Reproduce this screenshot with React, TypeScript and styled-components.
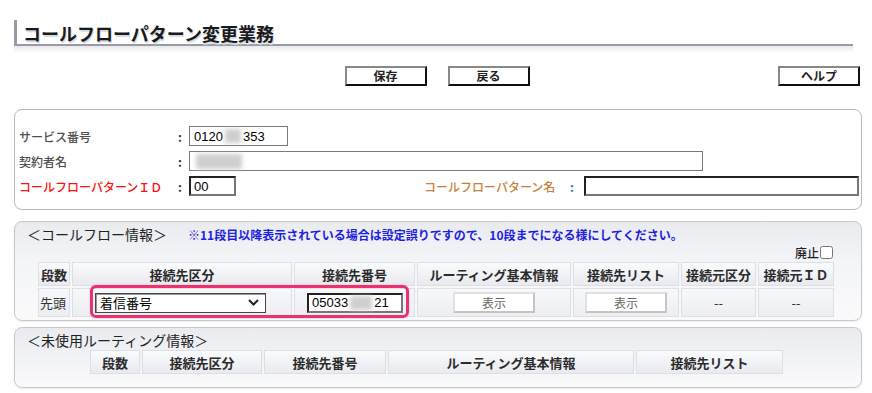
import styled, { createGlobalStyle } from "styled-components";

const Global = createGlobalStyle`
  body{
    margin: 0;
    background: #fff;
    font-family: "Noto Sans CJK JP", "Liberation Sans", sans-serif;
    font-size: 12px;
    color: #333;
  }
`

const Page = styled.div`
  padding: 20px 10px 8px 14px;
`

const Title = styled.h1`
  margin: 0;
  width: 830px;
  height: 24px;
  border-left: 3px solid #9a9aa5;
  border-bottom: 2px solid #9a9aa5;
  padding-left: 6px;
  font-size: 18px;
  line-height: 26px;
  font-weight: bold;
  color: #1a1a1a;
  text-shadow: 1px 2px 1px #d4dbe6;
  position: relative;
  &::after{
    content: '';
    position: absolute;
    left: -3px;
    right: 0;
    top: 26px;
    height: 7px;
    background: linear-gradient(#e9e9ec, rgba(255,255,255,0));
  }
`

const ButtonBar = styled.div`
  display: grid;
  grid-template-columns: 1fr auto 1fr;
  margin-top: 20px;
  padding-right: 2px;
`

const ButtonGroup = styled.div`
  display: flex;
  gap: 21px;
  grid-column: 2;
`

const RightCell = styled.div`
  display: flex;
  justify-content: flex-end;
`

const Button = styled.button`
  width: 82px;
  height: 20px;
  padding: 0;
  background: #fff;
  border: 2px solid;
  border-color: #888 #111 #111 #888;
  font-family: inherit;
  font-size: 12px;
  font-weight: bold;
  color: #222;
  line-height: 14px;
`

const Box = styled.div<{ $top: number }>`
  margin-top: ${p => p.$top}px;
  border: 1px solid #b9b9b9;
  border-radius: 8px;
`

const InfoBox = styled(Box)`
  padding: 16px 0 13px 4px;
  display: flex;
  flex-direction: column;
  gap: 5px;
`

const FormRow = styled.div`
  display: flex;
  align-items: center;
  height: 20px;
`

const Label = styled.span<{ $color?: string; $width: number }>`
  width: ${p => p.$width}px;
  color: ${p => p.$color || "#4f4f4f"};
  font-size: 12px;
  font-weight: 500;
  white-space: nowrap;
`

const Colon = styled.span<{ $color?: string; $width: number; $pad?: number }>`
  width: ${p => p.$width}px;
  padding-left: ${p => p.$pad ?? 4}px;
  box-sizing: border-box;
  color: ${p => p.$color || "#333"};
  font-weight: bold;
`

const Field = styled.div<{ $width: number; $inset?: boolean }>`
  width: ${p => p.$width}px;
  height: 20px;
  box-sizing: border-box;
  background: #fff;
  border: ${p => (p.$inset ? "2px solid" : "1px solid #7b7b7b")};
  border-color: ${p => (p.$inset ? "#222 #777 #777 #222" : "#7b7b7b")};
  display: flex;
  align-items: center;
  padding-left: ${p => (p.$inset ? 3 : 4)}px;
  font-family: "Liberation Sans", Arial, sans-serif;
  font-size: 13px;
  color: #000;
  white-space: nowrap;
`

const Blur = styled.span<{ $width: number; $height?: number }>`
  display: inline-block;
  width: ${p => p.$width}px;
  height: ${p => p.$height || 14}px;
  background: #cfcfcf;
  filter: blur(2px);
  margin: 0 2px;
`

const Section = styled(Box)`
  border-color: #c6c8cc;
  background: linear-gradient(#e9ebef, #f4f5f8 40px, #fafafb);
  box-shadow: 0 1px 2px rgba(0,0,0,0.08);
`

const SectionHead = styled.div`
  display: flex;
  align-items: baseline;
  gap: 21px;
  padding: 2px 0 0 12px;
  height: 20px;
`

const SectionTitle = styled.span`
  font-size: 14px;
  color: #222;
  line-height: 20px;
`

const Note = styled.span`
  font-size: 12px;
  font-weight: bold;
  color: #1f1fe0;
`

const AbolishRow = styled.div`
  display: flex;
  justify-content: flex-end;
  align-items: center;
  gap: 1px;
  padding-right: 28px;
  height: 16px;
  margin-bottom: 2px;
  font-size: 12px;
  font-weight: 500;
  color: #222;
  input{
    margin: 0;
    width: 13px;
    height: 13px;
  }
`

const TableWrap = styled.div<{ $left: number; $bottom: number }>`
  position: relative;
  margin-left: ${p => p.$left}px;
  padding-bottom: ${p => p.$bottom}px;
`

const Grid = styled.table<{ $width: number }>`
  width: ${p => p.$width}px;
  table-layout: fixed;
  border-collapse: separate;
  border-spacing: 2px;
  margin: -2px;
  th, td{
    border: 1px solid #dcdfe5;
    padding: 0;
    text-align: center;
    white-space: nowrap;
  }
  th{
    height: 22px;
    font-size: 13px;
    font-weight: bold;
    color: #2b2b2b;
    background: linear-gradient(#fafbfc, #e8eaef);
  }
  td{
    height: 27px;
    font-size: 13px;
    color: #333;
    background: linear-gradient(#f7f8fa, #eceef2);
  }
`

const Cell = styled.td<{ $align?: string; $pad?: number }>`
  && {
    text-align: ${p => p.$align || "center"};
    padding-left: ${p => p.$pad || 0}px;
  }
`

const SelectBox = styled.div`
  position: relative;
  width: 171px;
  height: 20px;
  box-sizing: border-box;
  border: 1px solid #444;
  box-shadow: inset 1px 1px 0 #999;
  background: #fff;
  display: flex;
  align-items: center;
  justify-content: space-between;
  padding: 0 6px 0 4px;
  font-size: 13px;
  color: #000;
  svg{ display: block; }
`

const ShowButton = styled.button`
  width: 82px;
  height: 21px;
  padding: 0;
  background: #fff;
  border: 2px solid;
  border-color: #e0e0e0 #c4c4c4 #c4c4c4 #e0e0e0;
  font-family: inherit;
  font-size: 12px;
  color: #666;
`

const Highlight = styled.div`
  position: absolute;
  left: 52px;
  top: 25px;
  width: 319px;
  height: 33px;
  box-sizing: border-box;
  border: 3px solid #e8336f;
  border-radius: 6px;
  box-shadow: 0 0 2px rgba(232, 51, 111, 0.4);
  pointer-events: none;
`

const flowCols = [32, 220, 121, 154, 106, 75, 76];
const flowHeads = ["段数", "接続先区分", "接続先番号", "ルーティング基本情報", "接続先リスト", "接続元区分", "接続元ＩＤ"];
const unusedCols = [50, 120, 122, 246, 147];
const unusedHeads = ["段数", "接続先区分", "接続先番号", "ルーティング基本情報", "接続先リスト"];

function App(){
  return(
    <Page>
      <Global />
      <Title>コールフローパターン変更業務</Title>

      <ButtonBar>
        <ButtonGroup>
          <Button>保存</Button>
          <Button>戻る</Button>
        </ButtonGroup>
        <RightCell>
          <Button>ヘルプ</Button>
        </RightCell>
      </ButtonBar>

      <InfoBox $top={23}>
        <FormRow>
          <Label $width={155}>サービス番号</Label>
          <Colon $width={15}>:</Colon>
          <Field $width={99}>0120<Blur $width={16} />353</Field>
        </FormRow>
        <FormRow>
          <Label $width={155}>契約者名</Label>
          <Colon $width={15}>:</Colon>
          <Field $width={514}><Blur $width={46} $height={15} /></Field>
        </FormRow>
        <FormRow>
          <Label $width={155} $color="#ff1010">コールフローパターンＩＤ</Label>
          <Colon $width={15}>:</Colon>
          <Field $width={47} $inset>00</Field>
          <Label $width={133} $color="#c8823c" style={{ marginLeft: 188 }}>コールフローパターン名</Label>
          <Colon $width={27} $pad={13} $color="#3070c0">:</Colon>
          <Field $width={275} $inset />
        </FormRow>
      </InfoBox>

      <Section $top={11}>
        <SectionHead>
          <SectionTitle>＜コールフロー情報＞</SectionTitle>
          <Note>※11段目以降表示されている場合は設定誤りですので、10段までになる様にしてください。</Note>
        </SectionHead>
        <AbolishRow>廃止<input type="checkbox" /></AbolishRow>
        <TableWrap $left={23} $bottom={3}>
          <Grid $width={800}>
            <colgroup>
              {flowCols.map((w, i) => <col key={i} style={{ width: w }} />)}
            </colgroup>
            <thead>
              <tr>{flowHeads.map(h => <th key={h}>{h}</th>)}</tr>
            </thead>
            <tbody>
              <tr>
                <Cell $align="left" $pad={1}>先頭</Cell>
                <Cell $align="left" $pad={22}>
                  <SelectBox>
                    <span>着信番号</span>
                    <svg width="11" height="7" viewBox="0 0 11 7">
                      <path d="M1 1l4.5 4.5L10 1" fill="none" stroke="#222" strokeWidth="2" />
                    </svg>
                  </SelectBox>
                </Cell>
                <Cell $align="left" $pad={12}>
                  <Field $width={96} $inset>05033<Blur $width={22} />21</Field>
                </Cell>
                <td><ShowButton>表示</ShowButton></td>
                <td><ShowButton>表示</ShowButton></td>
                <td>--</td>
                <td>--</td>
              </tr>
            </tbody>
          </Grid>
          <Highlight />
        </TableWrap>
      </Section>

      <Section $top={6}>
        <SectionHead>
          <SectionTitle>＜未使用ルーティング情報＞</SectionTitle>
        </SectionHead>
        <TableWrap $left={75} $bottom={13}>
          <Grid $width={697}>
            <colgroup>
              {unusedCols.map((w, i) => <col key={i} style={{ width: w }} />)}
            </colgroup>
            <thead>
              <tr>{unusedHeads.map(h => <th key={h}>{h}</th>)}</tr>
            </thead>
          </Grid>
        </TableWrap>
      </Section>
    </Page>
  );
}
export default App;
